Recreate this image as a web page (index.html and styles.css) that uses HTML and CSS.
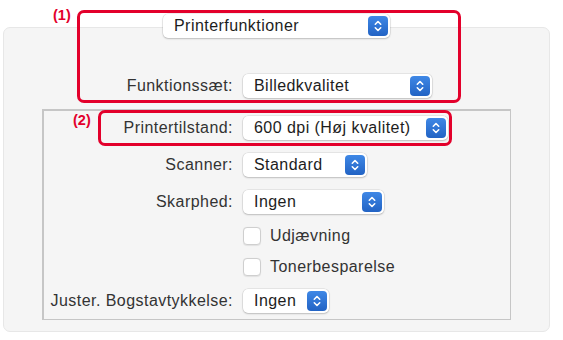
FILE: index.html
```html
<!DOCTYPE html>
<html lang="da">
<head>
    <meta charset="UTF-8">
    <meta name="viewport" content="width=device-width, initial-scale=1.0">
    <title>Printerfunktioner</title>
    <link rel="stylesheet" href="styles.css">
</head>
<body>
    <div class="page">
        <div class="top">
            <div class="popup popup-main">
                <span>Printerfunktioner</span>
                <span class="stepper"><svg width="20" height="20" viewBox="0 0 20 20"><path d="M7.3 8.2 L10 5.5 L12.7 8.2 M7.3 11.8 L10 14.5 L12.7 11.8" fill="none" stroke="#fff" stroke-width="1.6" stroke-linecap="round" stroke-linejoin="round"/></svg></span>
            </div>
        </div>

        <div class="panel">
            <div class="row set-row">
                <span class="label">Funktionssæt:</span>
                <div class="popup w-set">
                    <span>Billedkvalitet</span>
                    <span class="stepper"><svg width="20" height="20" viewBox="0 0 20 20"><path d="M7.3 8.2 L10 5.5 L12.7 8.2 M7.3 11.8 L10 14.5 L12.7 11.8" fill="none" stroke="#fff" stroke-width="1.6" stroke-linecap="round" stroke-linejoin="round"/></svg></span>
                </div>
            </div>

            <div class="group">
                <div class="row">
                    <span class="label">Printertilstand:</span>
                    <div class="popup w-mode">
                        <span>600 dpi (Høj kvalitet)</span>
                        <span class="stepper"><svg width="20" height="20" viewBox="0 0 20 20"><path d="M7.3 8.2 L10 5.5 L12.7 8.2 M7.3 11.8 L10 14.5 L12.7 11.8" fill="none" stroke="#fff" stroke-width="1.6" stroke-linecap="round" stroke-linejoin="round"/></svg></span>
                    </div>
                </div>
                <div class="row">
                    <span class="label">Scanner:</span>
                    <div class="popup w-scan">
                        <span>Standard</span>
                        <span class="stepper"><svg width="20" height="20" viewBox="0 0 20 20"><path d="M7.3 8.2 L10 5.5 L12.7 8.2 M7.3 11.8 L10 14.5 L12.7 11.8" fill="none" stroke="#fff" stroke-width="1.6" stroke-linecap="round" stroke-linejoin="round"/></svg></span>
                    </div>
                </div>
                <div class="row">
                    <span class="label">Skarphed:</span>
                    <div class="popup w-sharp">
                        <span>Ingen</span>
                        <span class="stepper"><svg width="20" height="20" viewBox="0 0 20 20"><path d="M7.3 8.2 L10 5.5 L12.7 8.2 M7.3 11.8 L10 14.5 L12.7 11.8" fill="none" stroke="#fff" stroke-width="1.6" stroke-linecap="round" stroke-linejoin="round"/></svg></span>
                    </div>
                </div>
                <div class="row check-row">
                    <span class="label"></span>
                    <span class="checkbox"></span>
                    <span class="check-text">Udjævning</span>
                </div>
                <div class="row check-row">
                    <span class="label"></span>
                    <span class="checkbox"></span>
                    <span class="check-text">Tonerbesparelse</span>
                </div>
                <div class="row">
                    <span class="label">Juster. Bogstavtykkelse:</span>
                    <div class="popup w-weight">
                        <span>Ingen</span>
                        <span class="stepper"><svg width="20" height="20" viewBox="0 0 20 20"><path d="M7.3 8.2 L10 5.5 L12.7 8.2 M7.3 11.8 L10 14.5 L12.7 11.8" fill="none" stroke="#fff" stroke-width="1.6" stroke-linecap="round" stroke-linejoin="round"/></svg></span>
                    </div>
                </div>
            </div>
        </div>

        <!-- annotation frames -->
        <div class="callout callout-1"><span class="callout-num">(1)</span></div>
        <div class="callout callout-2"><span class="callout-num">(2)</span></div>
    </div>
</body>
</html>
```

FILE: styles.css
```css
body {
    margin: 0;
    background: #fff;
    font-family: 'Liberation Sans', Arial, sans-serif;
    font-size: 16px;
    letter-spacing: 0.45px;
    color: #333;
}
.page {
    position: relative;
    width: 563px;
    height: 340px;
}
.top {
    position: relative;
    z-index: 1;
    padding: 14px 0 0 163px;
}
.panel {
    box-sizing: border-box;
    width: 547px;
    height: 305px;
    margin: -11px 0 0 3px;
    padding: 46px 0 0 38px;
    background: #f5f5f5;
    border: 1px solid #e7e7e7;
    border-radius: 7px;
}
.row {
    display: flex;
    align-items: center;
    height: 24px;
}
.label {
    width: 189px;
    margin-right: 10px;
    text-align: right;
    white-space: nowrap;
    color: #333;
}
.set-row {
    margin-bottom: 11px;
}
.set-row .label {
    width: 191px;
}
.group {
    box-sizing: border-box;
    width: 469px;
    height: 211px;
    padding: 5px 0;
    display: flex;
    flex-direction: column;
    gap: 13px;
    border: 2px solid #c6c6c6;
    border-right-width: 1.5px;
    border-bottom-width: 1.5px;
}
.popup {
    box-sizing: border-box;
    height: 24px;
    display: flex;
    align-items: center;
    justify-content: space-between;
    padding: 0 2px 0 11px;
    background: #fff;
    border-radius: 5px;
    box-shadow: 0 0 0 0.5px rgba(0, 0, 0, 0.12), 0 1px 2px rgba(0, 0, 0, 0.18);
    color: #1d1d1d;
    white-space: nowrap;
}
.popup-main { width: 227px; }
.w-set { width: 189px; }
.w-mode { width: 205px; }
.w-scan { width: 124px; }
.w-sharp { width: 141px; }
.w-weight { width: 86px; }
.stepper {
    width: 20px;
    height: 20px;
    border-radius: 4px;
    background: linear-gradient(#3f88e6, #2263c4);
    display: flex;
}
.check-row {
    height: 18px;
}
.checkbox {
    box-sizing: border-box;
    width: 18px;
    height: 18px;
    background: #fff;
    border: 1px solid #cfcfcf;
    border-radius: 4px;
    box-shadow: 0 0.5px 1px rgba(0, 0, 0, 0.08);
    margin-right: 9px;
}
.check-text {
    color: #333;
}
.callout {
    position: absolute;
    box-sizing: border-box;
    border: 3px solid #e3002b;
    border-radius: 7px;
    z-index: 2;
}
.callout-1 {
    left: 77px;
    top: 10px;
    width: 384px;
    height: 93px;
}
.callout-2 {
    left: 98px;
    top: 110px;
    width: 354px;
    height: 36px;
}
.callout-num {
    position: absolute;
    top: -6px;
    left: -27px;
    color: #e3002b;
    font-weight: bold;
    font-size: 14.5px;
    letter-spacing: 0;
}
.callout-2 .callout-num {
    top: -1px;
    left: -28px;
}
```
